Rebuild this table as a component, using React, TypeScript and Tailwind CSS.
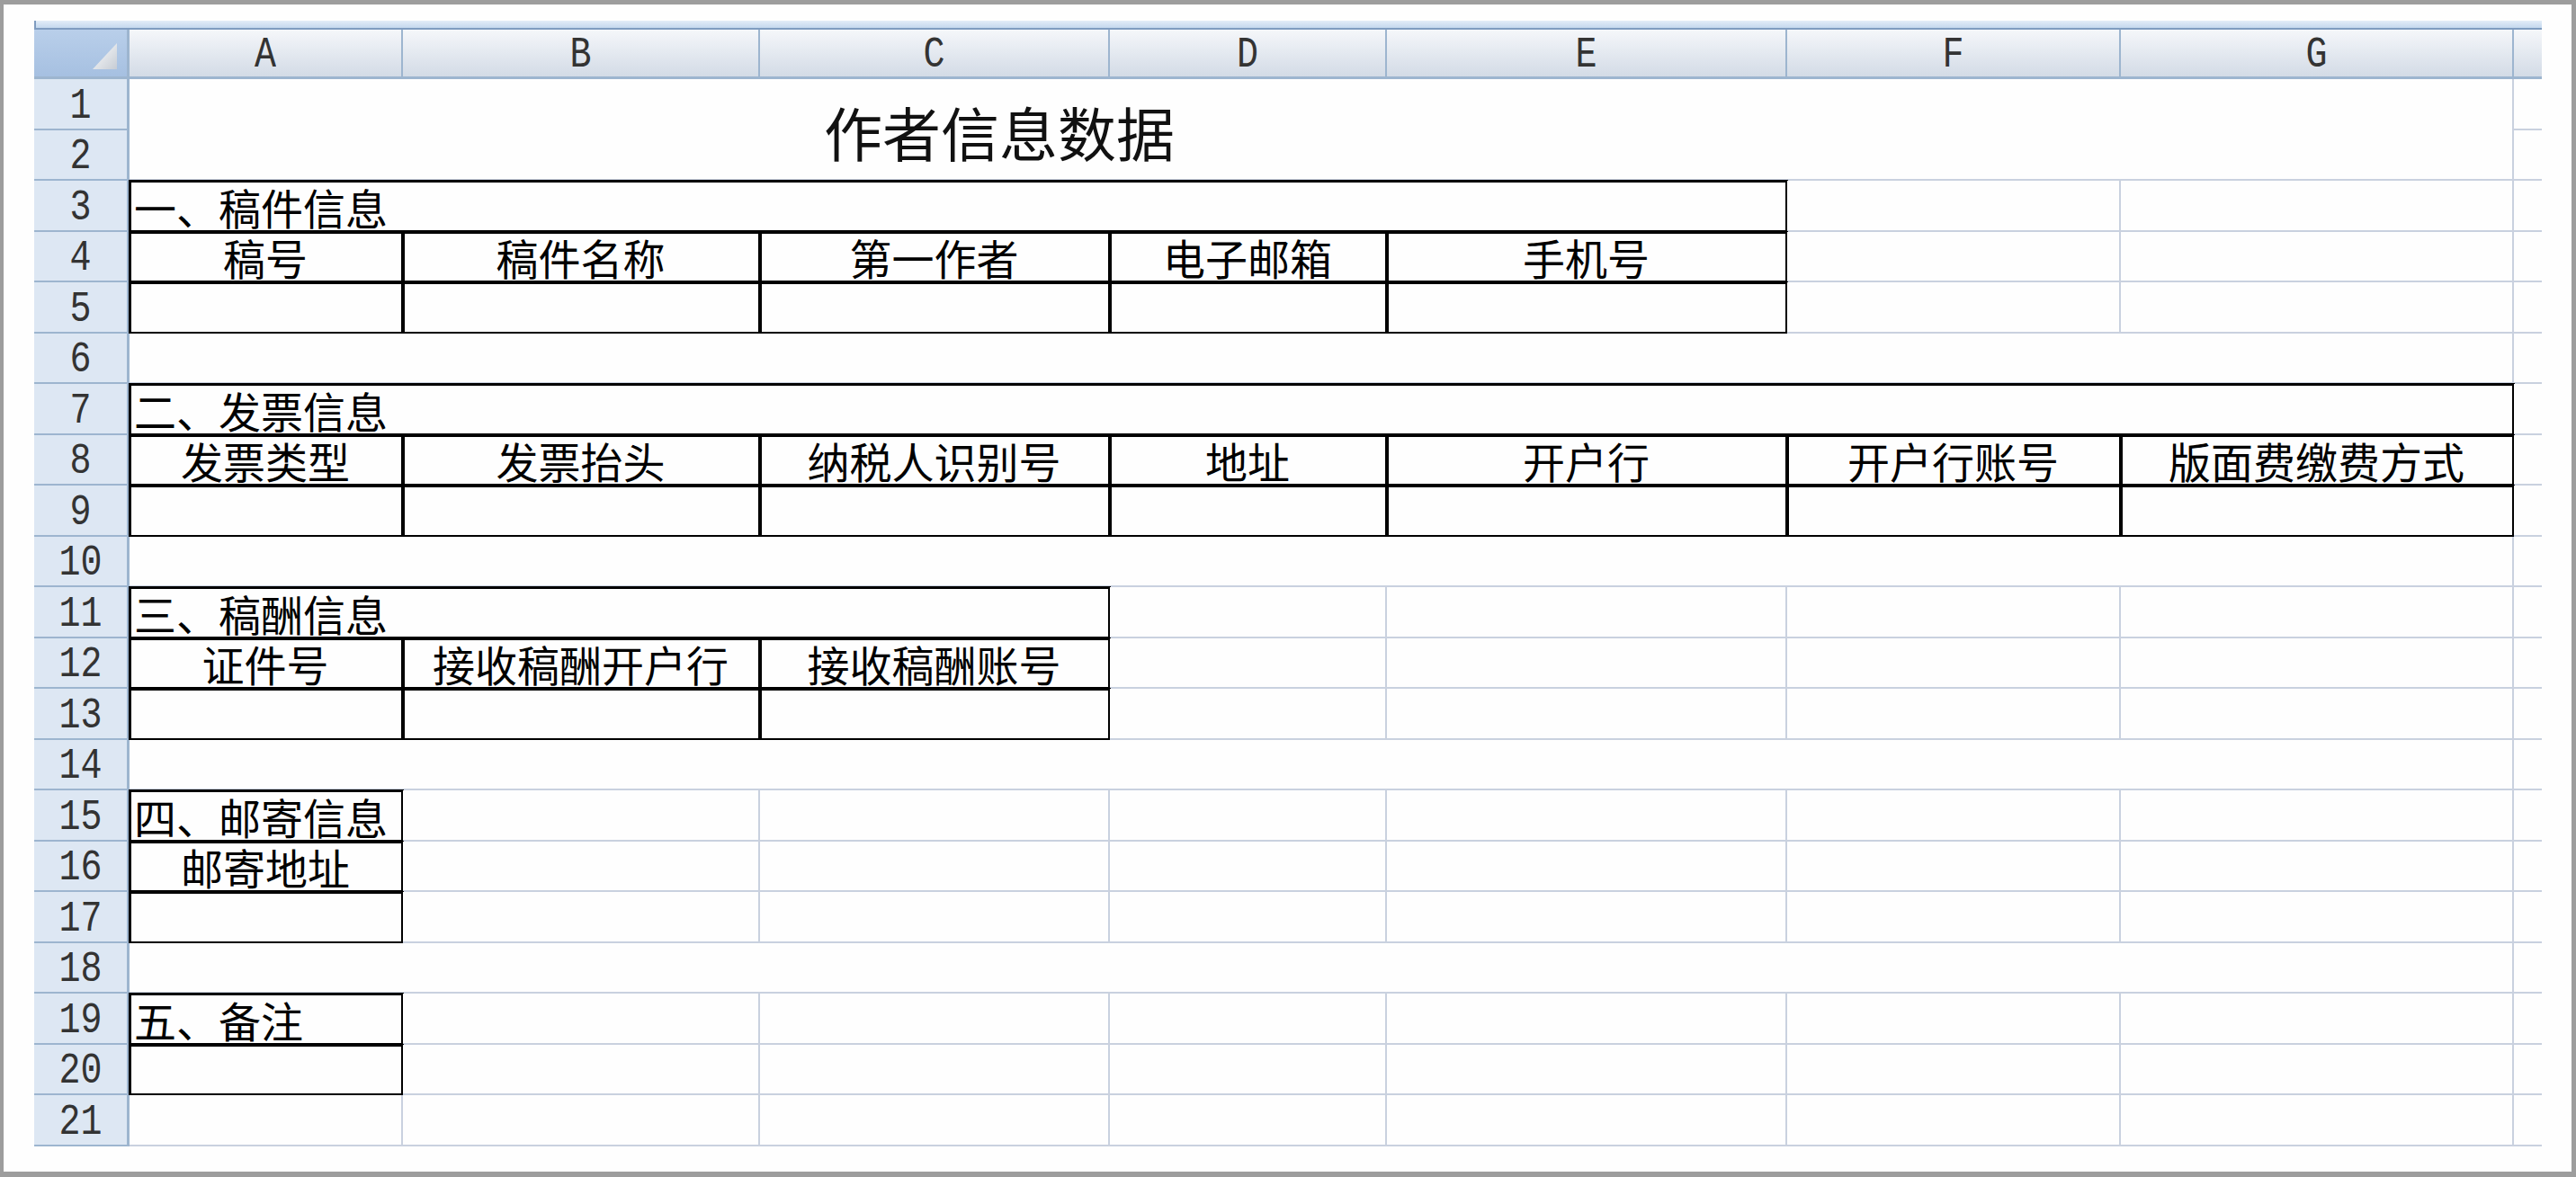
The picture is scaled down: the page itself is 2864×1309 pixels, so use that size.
const GRID = 'border-r-2 border-b-2 border-[#c9d1df] bg-[#fefefe]'
const BOX = 'outline-3 outline-solid outline-black -outline-offset-2'
const CJK = "font-['Noto_Sans_CJK_SC','Noto_Sans',sans-serif] text-[47px] leading-none text-black"

const COLS = ['A', 'B', 'C', 'D', 'E', 'F', 'G']

function RowHead({ n }: { n: number }) {
  return (
    <div className="flex items-center justify-center border-r-[3px] border-b-2 border-[#9db5cf] bg-[#dde7f3] pt-[6px]">
      <span className="scale-y-[1.18] font-['Liberation_Mono',monospace] text-[40px] leading-none text-[#333]">
        {n}
      </span>
    </div>
  )
}

function Cell({ className = '', children }: { className?: string; children?: React.ReactNode }) {
  return <div className={`${GRID} ${className}`}>{children}</div>
}

function Edge() {
  return <div className="border-b-2 border-[#c9d1df] bg-[#fefefe]" />
}

function Label({ text, className = '' }: { text: string; className?: string }) {
  return (
    <Cell className={`${BOX} flex items-end pb-[3px] pl-[5px] ${CJK} ${className}`}>{text}</Cell>
  )
}

function Head({ text }: { text: string }) {
  return (
    <Cell className={`${BOX} flex items-end justify-center pb-[3px] ${CJK}`}>{text}</Cell>
  )
}

function Blank({ boxed = false, className = '' }: { boxed?: boolean; className?: string }) {
  return <Cell className={`${boxed ? BOX : ''} ${className}`} />
}

function Plain({ count }: { count: number }) {
  return (
    <>
      {Array.from({ length: count }, (_, i) => (
        <Blank key={i} />
      ))}
    </>
  )
}

export default function App() {
  return (
    <div className="flex h-[1309px] w-[2864px] bg-[#9d9d9d] pt-[5px] pr-[5px] pb-[6px] pl-[4px]">
      <div className="flex-1 bg-[#fefefe] pt-[18px] pl-[34px]">
        <div className="h-[10px] w-[2788px] border-b-2 border-l-2 border-[#7f9cc0] bg-linear-to-b from-[#e3edf8] to-[#c4d8ee]" />

        <div className="grid w-[2788px] grid-cols-[106px_304px_397px_389px_308px_445px_371px_437px_31px] grid-rows-[55px_57px_56px_57px_56px_57px_56px_57px_56px_57px_56px_57px_56px_57px_56px_57px_56px_57px_56px_57px_56px_57px]">
          {/* header row */}
          <div className="flex items-end justify-end border-r-[3px] border-b-[3px] border-[#9db5cf] bg-linear-to-b from-[#b9cfea] to-[#a6c0e1] pr-[11px] pb-[8px]">
            <svg width="27" height="29" viewBox="0 0 27 29">
              <defs>
                <linearGradient id="tri" x1="0" y1="0" x2="1" y2="1">
                  <stop offset="0" stopColor="#ffffff" />
                  <stop offset="1" stopColor="#c6ccd4" />
                </linearGradient>
              </defs>
              <polygon points="27,0 27,29 0,29" fill="url(#tri)" />
            </svg>
          </div>
          {COLS.map((c) => (
            <div
              key={c}
              className="flex items-center justify-center border-r-2 border-b-[3px] border-[#9db5cf] bg-linear-to-b from-[#f5f7fa] to-[#d3dbe6] pt-[6px]"
            >
              <span className="scale-y-[1.18] font-['Liberation_Mono',monospace] text-[40px] leading-none text-[#333]">
                {c}
              </span>
            </div>
          ))}
          <div className="border-b-[3px] border-[#9db5cf] bg-linear-to-b from-[#f5f7fa] to-[#d3dbe6]" />

          {/* 1-2 title */}
          <RowHead n={1} />
          <Cell className="col-span-7 row-span-2 flex items-center pt-[5px] pl-[772px]">
            <span className="font-['Noto_Sans_CJK_SC','Noto_Sans',sans-serif] text-[65px] leading-none text-[#111]">
              作者信息数据
            </span>
          </Cell>
          <Edge />
          <RowHead n={2} />
          <Edge />

          {/* 一、稿件信息 */}
          <RowHead n={3} />
          <Label text="一、稿件信息" className="col-span-5" />
          <Plain count={2} />
          <Edge />

          <RowHead n={4} />
          <Head text="稿号" />
          <Head text="稿件名称" />
          <Head text="第一作者" />
          <Head text="电子邮箱" />
          <Head text="手机号" />
          <Plain count={2} />
          <Edge />

          <RowHead n={5} />
          <Blank boxed />
          <Blank boxed />
          <Blank boxed />
          <Blank boxed />
          <Blank boxed />
          <Plain count={2} />
          <Edge />

          <RowHead n={6} />
          <Blank className="col-span-7" />
          <Edge />

          {/* 二、发票信息 */}
          <RowHead n={7} />
          <Label text="二、发票信息" className="col-span-7" />
          <Edge />

          <RowHead n={8} />
          <Head text="发票类型" />
          <Head text="发票抬头" />
          <Head text="纳税人识别号" />
          <Head text="地址" />
          <Head text="开户行" />
          <Head text="开户行账号" />
          <Head text="版面费缴费方式" />
          <Edge />

          <RowHead n={9} />
          {COLS.map((c) => (
            <Blank key={c} boxed />
          ))}
          <Edge />

          <RowHead n={10} />
          <Blank className="col-span-7" />
          <Edge />

          {/* 三、稿酬信息 */}
          <RowHead n={11} />
          <Label text="三、稿酬信息" className="col-span-3" />
          <Plain count={4} />
          <Edge />

          <RowHead n={12} />
          <Head text="证件号" />
          <Head text="接收稿酬开户行" />
          <Head text="接收稿酬账号" />
          <Plain count={4} />
          <Edge />

          <RowHead n={13} />
          <Blank boxed />
          <Blank boxed />
          <Blank boxed />
          <Plain count={4} />
          <Edge />

          <RowHead n={14} />
          <Blank className="col-span-7" />
          <Edge />

          {/* 四、邮寄信息 */}
          <RowHead n={15} />
          <Label text="四、邮寄信息" />
          <Plain count={6} />
          <Edge />

          <RowHead n={16} />
          <Head text="邮寄地址" />
          <Plain count={6} />
          <Edge />

          <RowHead n={17} />
          <Blank boxed />
          <Plain count={6} />
          <Edge />

          <RowHead n={18} />
          <Blank className="col-span-7" />
          <Edge />

          {/* 五、备注 */}
          <RowHead n={19} />
          <Label text="五、备注" />
          <Plain count={6} />
          <Edge />

          <RowHead n={20} />
          <Blank boxed />
          <Plain count={6} />
          <Edge />

          <RowHead n={21} />
          <Plain count={7} />
          <Edge />
        </div>
      </div>
    </div>
  )
}
